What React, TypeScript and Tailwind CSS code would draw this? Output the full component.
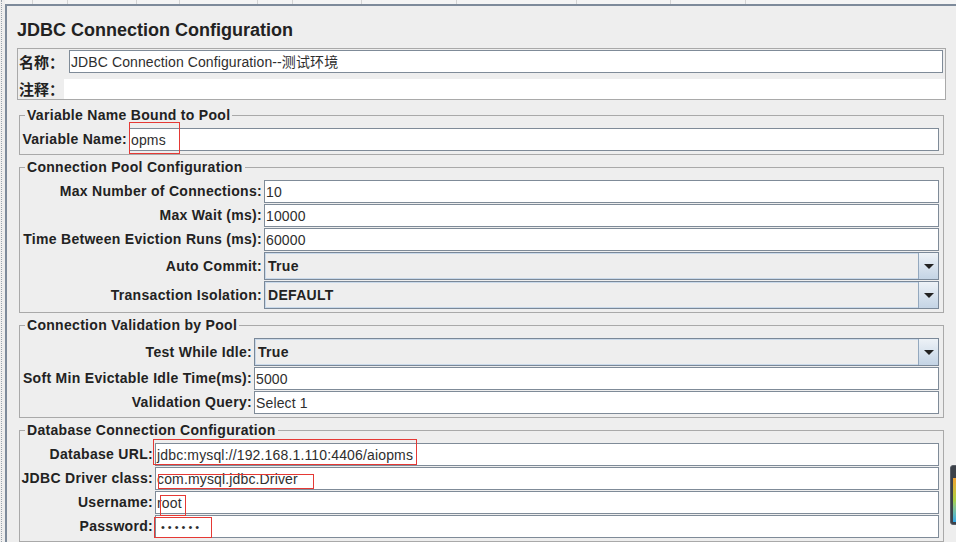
import React from "react";

type Row = { label: string; value: string; kind?: "text" | "combo" | "password" };

const poolRows: Row[] = [
  { label: "Max Number of Connections:", value: "10" },
  { label: "Max Wait (ms):", value: "10000" },
  { label: "Time Between Eviction Runs (ms):", value: "60000" },
  { label: "Auto Commit:", value: "True", kind: "combo" },
  { label: "Transaction Isolation:", value: "DEFAULT", kind: "combo" },
];

const validationRows: Row[] = [
  { label: "Test While Idle:", value: "True", kind: "combo" },
  { label: "Soft Min Evictable Idle Time(ms):", value: "5000" },
  { label: "Validation Query:", value: "Select 1" },
];

const dbRows: Row[] = [
  { label: "Database URL:", value: "jdbc:mysql://192.168.1.110:4406/aiopms" },
  { label: "JDBC Driver class:", value: "com.mysql.jdbc.Driver" },
  { label: "Username:", value: "root" },
  { label: "Password:", value: "••••••", kind: "password" },
];

function TextField({ value, password }: { value: string; password?: boolean }) {
  return (
    <div className="h-[23px] bg-white border border-[#7f8b98] flex items-center pl-[1px] pt-[1px] text-[14px] tracking-[0.15px] text-[#2e2e2e] whitespace-nowrap overflow-hidden">
      {password ? (
        <span className="text-[11px] tracking-[3px] pl-[4px]">{value}</span>
      ) : (
        value
      )}
    </div>
  );
}

function Combo({ value }: { value: string }) {
  return (
    <div className="h-[28px] flex border border-[#7a8898] bg-[#eeeeee] shadow-[inset_1px_1px_0_#c9d9ea,inset_-1px_-1px_0_#c9d9ea]">
      <div className="flex-1 flex items-center pl-[3px] text-[14px] font-bold text-[#222] tracking-[0.3px]">
        {value}
      </div>
      <div className="w-[20px] border-l border-[#93a8be] bg-linear-to-b from-[#edf2f7] to-[#c4d4e5] flex items-center justify-center">
        <div className="w-0 h-0 border-l-[5px] border-r-[5px] border-t-[5px] border-l-transparent border-r-transparent border-t-[#222]" />
      </div>
    </div>
  );
}

function Group({
  title,
  rows,
  labelWidth,
  className,
}: {
  title: string;
  rows: Row[];
  labelWidth: string;
  className: string;
}) {
  return (
    <fieldset className={`mx-[2px] border border-[#a9a9a9] ${className}`}>
      <legend className="ml-[5px] px-[2px] text-[14px] font-bold leading-[16px] tracking-[0.3px] text-[#222]">
        {title}
      </legend>
      <div className={`grid ${labelWidth} gap-x-[1px] gap-y-[1px] items-center mt-[5px] pb-[3px] pr-[4px]`}>
        {rows.map((row) => (
          <React.Fragment key={row.label}>
            <div className="text-right pr-[1px] text-[14px] font-bold tracking-[0.3px] text-[#222] whitespace-nowrap">
              {row.label}
            </div>
            {row.kind === "combo" ? (
              <Combo value={row.value} />
            ) : (
              <TextField value={row.value} password={row.kind === "password"} />
            )}
          </React.Fragment>
        ))}
      </div>
    </fieldset>
  );
}

export default function App() {
  return (
    <div className="w-[956px] h-[542px] overflow-hidden relative flex bg-[#eeeeee] font-['Liberation_Sans','Noto_Sans_CJK_SC',sans-serif] text-[#222]">
      {/* splitter dots */}
      <div className="w-[5px] shrink-0">
        <div className="ml-[1px] h-full border-l border-dotted border-[#9aa3ad]" />
      </div>

      <div className="flex-1 flex flex-col">
        {/* header strip of the tree/table above */}
        <div className="h-[4px] flex bg-[#f4f4f4]">
          <div className="w-[28px] border-r border-[#d4d4d4]" />
          <div className="w-[35px] border-r border-[#d4d4d4]" />
          <div className="w-[69px] border-r border-[#d4d4d4]" />
          <div className="w-[43px] border-r border-[#d4d4d4]" />
          <div className="w-[78px] border-r border-[#d4d4d4]" />
          <div className="w-[35px] border-r border-[#d4d4d4]" />
          <div className="w-[69px] border-r border-[#d4d4d4]" />
          <div className="w-[95px] border-r border-[#d4d4d4]" />
          <div className="w-[120px] border-r border-[#d4d4d4]" />
          <div className="w-[94px] border-r border-[#d4d4d4]" />
          <div className="w-[75px] border-r border-[#d4d4d4]" />
          <div className="flex-1" />
        </div>

        <div className="flex-1 border-l-2 border-t-2 border-[#7d8a9a] px-[10px]">
          <h1 className="mt-[14px] text-[18px] leading-[21px] font-bold text-[#222]">
            JDBC Connection Configuration
          </h1>

          {/* name / comments */}
          <div className="mt-[7px] border border-[#a9a9a9]">
            <div className="flex items-center pt-[1px] pr-[2px] mb-[6px]">
              <div className="w-[51px] pl-[1px] text-[15px] font-bold font-['Noto_Sans_CJK_SC',sans-serif] leading-[23px]">
                名称：
              </div>
              <div className="flex-1 h-[23px] bg-white border border-[#7f8b98] flex items-center pl-[1px] pt-[1px] text-[14px] tracking-[0.1px] text-[#2e2e2e]">
                JDBC Connection Configuration--测试环境
              </div>
            </div>
            <div className="flex items-center h-[20px]">
              <div className="w-[46px] pl-[1px] text-[15px] font-bold font-['Noto_Sans_CJK_SC',sans-serif] leading-[20px]">
                注释：
              </div>
              <div className="flex-1 h-[20px] bg-white" />
            </div>
          </div>

          <Group
            title="Variable Name Bound to Pool"
            rows={[{ label: "Variable Name:", value: "opms" }]}
            labelWidth="grid-cols-[108px_1fr]"
            className="mt-[7px]"
          />
          <Group
            title="Connection Pool Configuration"
            rows={poolRows}
            labelWidth="grid-cols-[243px_1fr]"
            className="mt-[4px]"
          />
          <Group
            title="Connection Validation by Pool"
            rows={validationRows}
            labelWidth="grid-cols-[233px_1fr]"
            className="mt-[4px]"
          />
          <Group
            title="Database Connection Configuration"
            rows={dbRows}
            labelWidth="grid-cols-[134px_1fr]"
            className="mt-[4px]"
          />
        </div>
      </div>

      {/* red annotation boxes drawn over the form */}
      <div className="absolute left-[129px] top-[122px] w-[51px] h-[32px] border border-[#e53935]" />
      <div className="absolute left-[153px] top-[439px] w-[264px] h-[26px] border border-[#e53935]" />
      <div className="absolute left-[158px] top-[474px] w-[156px] h-[15px] border border-[#e53935]" />
      <div className="absolute left-[160px] top-[495px] w-[26px] h-[21px] border border-[#e53935]" />
      <div className="absolute left-[154px] top-[517px] w-[58px] h-[21px] border border-[#e53935]" />

      {/* floating widget peeking in at the right edge */}
      <div className="absolute left-[950px] top-[465px] w-[10px] h-[60px] rounded-[3px] bg-[#3c4149] border border-[#5b6068]">
        <div className="ml-[2px] mt-[12px] w-[3px] h-[44px] bg-linear-to-b from-[#f0a030] via-[#a8d040] to-[#30a8e8]" />
      </div>
    </div>
  );
}
